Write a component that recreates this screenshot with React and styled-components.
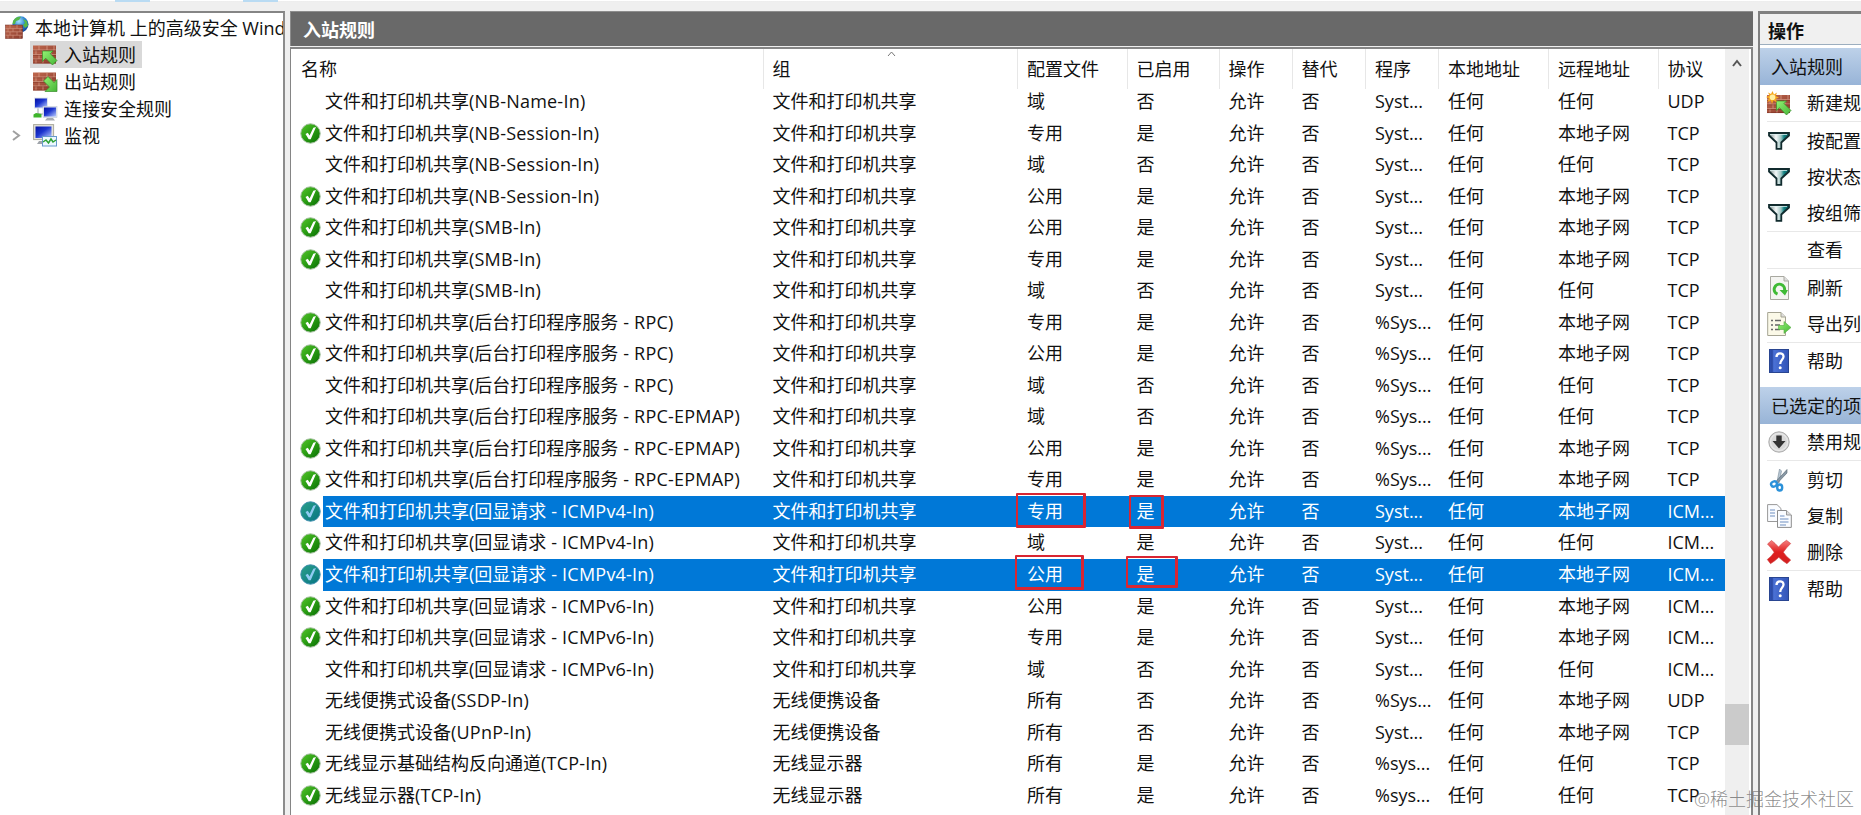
import React from "react";
import styled, { createGlobalStyle, css } from "styled-components";

const Global = createGlobalStyle`
  * { box-sizing: border-box; }
  html, body { margin: 0; height: 100%; overflow: hidden; }
  body {
    background: #efefef;
    color: #111;
    font: 18px/24px "Open Sans", "Noto Sans CJK SC", sans-serif;
    white-space: pre;
  }
  svg { display: block; flex: none; overflow: visible; }
`;

const Window = styled.div`
  position: relative;
  width: 1861px;
  height: 815px;
  display: flex;
  flex-direction: column;
  overflow: hidden;
`;
const Toolbar = styled.div`
  height: 11px;
  display: flex;
  padding-left: 115px;
  gap: 93px;
  background: linear-gradient(#fff 1px, #ececec 1px, #efefef 2px);
`;
const ToolMark = styled.i`
  width: 35px;
  height: 2px;
  background: #b9dbf3;
`;
const Panes = styled.div`
  flex: 1;
  min-height: 0;
  display: flex;
  gap: 5px;
`;

const TreePane = styled.nav`
  width: 285px;
  background: #fff;
  border-top: 2px solid #858585;
  border-right: 2px solid #8c8c8c;
  padding-top: 1px;
  overflow: hidden;
`;
const TreeRow = styled.div`
  height: 27px;
  display: flex;
  align-items: center;
  padding-left: ${(p) => (p.$root ? 5 : 12)}px;
  gap: ${(p) => (p.$root ? 6 : 0)}px;
`;
const Expander = styled.span`
  width: 18px;
  display: flex;
`;
const TreeItem = styled.span`
  height: 27px;
  display: flex;
  align-items: center;
  gap: 7px;
  padding: 0 6px 0 3px;
  background: ${(p) => (p.$active ? "#d9d9d9" : "transparent")};
`;

const MainPane = styled.main`
  width: 1463px;
  display: flex;
  flex-direction: column;
`;
const Title = styled.div`
  height: 35px;
  padding: 2px 0 0 12px;
  display: flex;
  align-items: center;
  background: #696969;
  border: solid #8d8d8d;
  border-width: 1px 0 0 1px;
  color: #fff;
  font-weight: 700;
`;
const ListFrame = styled.div`
  flex: 1;
  min-height: 0;
  margin-top: 1px;
  display: flex;
  background: #fff;
  border: 2px solid #858585;
  border-bottom: 0;
  border-left-width: 1px;
  overflow: hidden;
`;
const Table = styled.div`
  width: 1434px;
  display: flex;
  flex-direction: column;
`;
const columns = css`
  display: grid;
  grid-template-columns: 472.5px 254.5px 109.5px 92px 73px 73.5px 73px 110px 109.5px 66.500px;
`;
const Header = styled.div`
  ${columns}
  height: 37px;
  flex: none;
  line-height: 40px;
`;
const HeadCell = styled.div`
  position: relative;
  border-right: 1px solid #e7e7e7;
  padding-left: ${(p) => (p.$first ? 10 : 9)}px;
  &:last-child { border-right: 0; }
`;
const SortMark = styled.span`
  position: absolute;
  left: 123px;
  top: 2px;
`;
const Row = styled.div`
  ${columns}
  height: 31.54px;
  flex: none;
  line-height: 31.5px;
  color: ${(p) => (p.$selected ? "#fff" : "#111")};
  background: ${(p) => (p.$selected ? "linear-gradient(90deg, #fff 32px, #0078d7 32px)" : "none")};
`;
const Cell = styled.div`
  padding-left: 9px;
`;
const NameCell = styled.div`
  display: flex;
  align-items: center;
  padding-left: 9px;
`;
const StatusSlot = styled.span`
  width: 25px;
  flex: none;
`;
const Latin = styled.span`
  letter-spacing: 0.22px;
`;
const Scrollbar = styled.div`
  flex: 1;
  margin-right: 2px;
  background: #efefef;
  display: flex;
  flex-direction: column;
  align-items: center;
  justify-content: space-between;
  padding: 11px 0 70px;
`;
const Thumb = styled.i`
  width: 24px;
  height: 41px;
  background: #cbcbcb;
`;

const ActionPane = styled.aside`
  flex: 1;
  min-width: 0;
  background: #fff;
  border: solid #808080;
  border-width: 3px 0 0 2px;
  overflow: hidden;
`;
const ActionTitle = styled.div`
  height: 31px;
  padding: 4px 0 0 8px;
  background: #f0f0f0;
  border-bottom: 1px solid #9caebf;
  font-weight: 700;
  line-height: 27px;
`;
const Section = styled.div`
  height: 37px;
  margin-top: ${(p) => p.$gap}px;
  padding-left: 11px;
  background: linear-gradient(#bdd1e9, #98b4d7);
  line-height: 38px;
`;
const Action = styled.div`
  height: 36px;
  display: flex;
  align-items: center;
  gap: 16px;
  padding-left: 7px;
  line-height: 36px;
`;
const IconSlot = styled.span`
  width: 24px;
  flex: none;
  display: flex;
  justify-content: center;
`;
const Divider = styled.hr`
  height: 1px;
  margin: 0 0 0.5px 7px;
  border: 0;
  background: #e8e8e8;
`;
const Mark = styled.span`
  position: absolute;
  left: ${(p) => p.$x}px;
  top: ${(p) => p.$y}px;
  width: ${(p) => p.$w}px;
  height: ${(p) => p.$h}px;
  border: solid #d92632;
  border-width: 2px 3px 3px 2px;
  border-radius: 1px;
`;
const Watermark = styled.span`
  position: absolute;
  right: 7px;
  bottom: 4px;
  color: rgba(110, 110, 110, 0.8);
  font-weight: 300;
`;

const Defs = () => (
  <svg width="0" height="0" style={{ position: "absolute" }}>
    <defs>
      <linearGradient id="brick" x1="0" y1="0" x2="1" y2="1">
        <stop offset="0" stopColor="#c0694f" />
        <stop offset="1" stopColor="#8a3a2c" />
      </linearGradient>
      <linearGradient id="arrow" x1="0" y1="0" x2="1" y2="1">
        <stop offset="0" stopColor="#93f274" />
        <stop offset="1" stopColor="#45b536" />
      </linearGradient>
      <radialGradient id="globe" cx=".4" cy=".3" r=".75">
        <stop offset="0" stopColor="#a9e4ff" />
        <stop offset=".5" stopColor="#2f86d4" />
        <stop offset="1" stopColor="#0b3f94" />
      </radialGradient>
      <linearGradient id="screen" x1="0" y1="0" x2="1" y2="1">
        <stop offset="0" stopColor="#0410a0" />
        <stop offset=".45" stopColor="#1c35cf" />
        <stop offset="1" stopColor="#b9ccff" />
      </linearGradient>
      <linearGradient id="ok" x1="0" y1="0" x2="1" y2="1">
        <stop offset="0" stopColor="#56c62c" />
        <stop offset=".5" stopColor="#2a9d13" />
        <stop offset="1" stopColor="#086d04" />
      </linearGradient>
      <linearGradient id="okSel" x1="0" y1="0" x2="1" y2="1">
        <stop offset="0" stopColor="#2ba18a" />
        <stop offset="1" stopColor="#067383" />
      </linearGradient>
      <linearGradient id="funnel">
        <stop offset="0" stopColor="#6f8585" />
        <stop offset=".35" stopColor="#f4f8f8" />
        <stop offset=".6" stopColor="#9ec4c2" />
        <stop offset=".75" stopColor="#108080" />
        <stop offset="1" stopColor="#0b5c60" />
      </linearGradient>
      <linearGradient id="help">
        <stop offset="0" stopColor="#2546a8" />
        <stop offset=".25" stopColor="#4a70d4" />
        <stop offset="1" stopColor="#3355b8" />
      </linearGradient>
      <linearGradient id="cross" x1="0" y1="0" x2="0" y2="1">
        <stop offset="0" stopColor="#f58080" />
        <stop offset=".5" stopColor="#e01f1f" />
        <stop offset="1" stopColor="#d22020" />
      </linearGradient>
    </defs>
  </svg>
);

const Bricks = ({ y = 0 }) => (
  <g transform={`translate(0 ${y})`}>
    <rect width="23" height="18" fill="url(#brick)" />
    <path d="M0 4.5H23M0 9H23M0 13.5H23M6 0V4.500M14 0V4.500M21 0V4.500M3 4.500V9M10 4.500V9M18 4.500V9M6 9V13.500M14 9V13.500M3 13.500V18M10 13.500V18M18 13.500V18" stroke="#e0a893" strokeWidth=".9" fill="none" opacity=".75" />
    <path d="M0 5.300H23M0 9.800H23M0 14.300H23M0 17.600H23" stroke="#6c2118" strokeWidth=".6" opacity=".7" />
  </g>
);
const InArrow = "M9.500 6H20L17.300 8.700L24 15.500L19.500 20L12.700 13.200L9.500 16.500Z";
const OutArrow = "M10.500 9L15 4.500L21 10.500L24 7.500V19.500H12L16.500 15Z";
const WallIcon = ({ out }) => (
  <svg width="24" height="20" viewBox="0 0 24 20">
    <Bricks y={0.5} />
    <path d={out ? OutArrow : InArrow} fill="url(#arrow)" stroke="#378d29" strokeWidth=".7" />
  </svg>
);
const NewRuleIcon = () => (
  <svg width="24" height="24" viewBox="0 0 24 24">
    <Bricks y={4} />
    <path d="M9.500 10H19.500L17 12.500L24 19.500L19.500 24L12.500 16.700L9.500 19.500Z" fill="url(#arrow)" stroke="#378d29" strokeWidth=".7" />
    <path d="M5.500 0L7 3.500L10 1.500L8.700 5L12 6.500L8.700 8L10 11.500L6.500 9.500L5 13L3.800 9.500L.3 11L2 7.500L-1 6L2.500 4.500L1 1.500L4 3Z" fill="#f6a61d" />
    <circle cx="5.500" cy="6.300" r="2.800" fill="#fff0a2" />
  </svg>
);
const FirewallIcon = () => (
  <svg width="24" height="24" viewBox="0 0 24 24">
    <circle cx="15.500" cy="8.300" r="8" fill="url(#globe)" />
    <path d="M8 5C10 1 14 0 16 1L14 4L11 5L10 8L7.500 8ZM18 3L22 5L23 10L20 12L18 9L20 7ZM13 9L17 11L17 16L13 14Z" fill="#55b849" />
    <rect x=".5" y="9" width="17" height="13.500" fill="url(#brick)" stroke="#6d241b" strokeWidth=".5" />
    <path d="M.5 12.400H17.500M.5 15.800H17.500M.5 19.200H17.500M5 9V12.400M12 9V12.400M8 12.400V15.800M15 12.400V15.800M3 12.400V15.800M5 15.800V19.200M12 15.800V19.200M8 19.200V22.500M15 19.200V22.500M3 19.200V22.500" stroke="#d0907c" strokeWidth=".7" />
  </svg>
);
const ConnectionIcon = () => (
  <svg width="24" height="24" viewBox="0 0 24 24">
    <path d="M5 10V17H11" stroke="#9aa0a8" fill="none" />
    <rect x="1" y=".5" width="14" height="11" fill="#dfe5ee" />
    <rect x="2" y="1.500" width="12" height="9" fill="url(#screen)" />
    <rect x="10" y="9.500" width="14" height="11" fill="#dfe5ee" stroke="#bcc4d0" strokeWidth=".5" />
    <rect x="11" y="10.500" width="12" height="9" fill="url(#screen)" />
    <path d="M14 21H20L22 23.500H12Z" fill="#a7acb2" />
    <path d="M.5 17.500L3 16L8.500 17V20.500H.5Z" fill="#3fb52c" />
  </svg>
);
const MonitorIcon = () => (
  <svg width="24" height="24" viewBox="0 0 24 24">
    <rect x=".6" y=".6" width="20" height="15" fill="#e2e2dc" stroke="#aaa99c" />
    <rect x="2.500" y="2.500" width="16" height="11.500" fill="url(#screen)" />
    <path d="M6 17H12V20H4Z" fill="#a0a4aa" />
    <rect x="9.500" y="12.500" width="14" height="9.500" fill="#edf8ff" stroke="#6699cc" />
    <path d="M10 18L13 16L15.500 19L18 15L20 18L23 16" fill="none" stroke="#2fa336" strokeWidth="1.500" />
  </svg>
);
const StatusIcon = ({ selected }) => (
  <svg width="21" height="21" viewBox="0 0 21 21">
    <circle cx="10.500" cy="10.500" r="9.700" fill={selected ? "url(#okSel)" : "url(#ok)"} stroke={selected ? "#398dab" : "#9fbd9a"} strokeWidth="1" />
    <path d="M5.500 11L7.800 9.800L9.600 12.600L13.300 4.800L16 4L10.700 16.200H8.700Z" fill={selected ? "#8fcbf2" : "#fff"} />
  </svg>
);
const FunnelIcon = () => (
  <svg width="22" height="18" viewBox="0 0 22 18">
    <path d="M1 1H21V3.500L13.300 10.500V16.800H8.500V10.500L1 3.500Z" fill="url(#funnel)" stroke="#112b2e" strokeWidth="1.800" />
    <path d="M2 2.500H19" stroke="#d9eeee" strokeWidth=".8" />
  </svg>
);
const RefreshIcon = () => (
  <svg width="24" height="24" viewBox="0 0 24 24">
    <path d="M3.500 .5H17L21.500 5V23.500H3.500Z" fill="#f4f4f1" stroke="#a8a8a0" />
    <path d="M17 .5V5H21.500" fill="#ddd" stroke="#a8a8a0" />
    <path d="M10.500 18.200A5.200 5.200 0 1 1 17.500 14.500" fill="none" stroke="#3fba35" strokeWidth="3" />
    <path d="M12.500 14H21L18 19.500Z" fill="#3fba35" />
  </svg>
);
const ExportIcon = () => (
  <svg width="24" height="24" viewBox="0 0 24 24">
    <path d="M.7 .5H14L18.500 5V23.500H.7Z" fill="#fbf9e8" stroke="#a5a493" />
    <path d="M14 .5V5H18.500" fill="#ddd" stroke="#a5a493" />
    <path d="M4 8.500H6M4 13H6M4 17.500H6M8 8.500H14M8 13H13M8 17.500H13" stroke="#666" strokeWidth="1.400" />
    <path d="M11.500 13.500H17V9.500L24 15.500L17 21.500V17.500H11.500Z" fill="url(#arrow)" stroke="#55a943" strokeWidth=".6" />
  </svg>
);
const HelpIcon = () => (
  <svg width="20" height="24" viewBox="0 0 20 24">
    <rect x=".5" y=".5" width="19" height="23" fill="url(#help)" stroke="#294591" />
    <path d="M3 1V23" stroke="#244197" />
    <path d="M7.500 8C7.500 3 14.800 3.200 14.500 7.800C14.300 10.800 11.200 10.800 11.200 15" fill="none" stroke="#fff" strokeWidth="2.300" />
    <circle cx="11.200" cy="18.800" r="1.500" fill="#fff" />
  </svg>
);
const DisableIcon = () => (
  <svg width="22" height="22" viewBox="0 0 22 22">
    <circle cx="11" cy="11" r="10.200" fill="#d9d9d9" stroke="#aaa" />
    <circle cx="11" cy="11" r="8.500" fill="none" stroke="#ececec" />
    <path d="M8.300 4.500H13.700V10H17.500L11 17.500L4.500 10H8.300Z" fill="#333" />
  </svg>
);
const CutIcon = () => (
  <svg width="20" height="24" viewBox="0 0 20 24">
    <path d="M10.500 1L8 14L10 15L12.500 3Z" fill="#b9c7d4" stroke="#758896" strokeWidth=".6" />
    <path d="M18 1.500V5L8.500 15L7 13.500Z" fill="#8898a5" stroke="#566570" strokeWidth=".6" />
    <ellipse cx="5" cy="16" rx="3" ry="2.500" transform="rotate(-25 5 16)" fill="none" stroke="#2b91d9" strokeWidth="2.400" />
    <ellipse cx="10.700" cy="19.500" rx="2.500" ry="3" fill="none" stroke="#2b91d9" strokeWidth="2.400" />
  </svg>
);
const CopyIcon = () => (
  <svg width="25" height="24" viewBox="0 0 25 24">
    <path d="M.6 .6H10L14 4.500V17.500H.6Z" fill="#fafcff" stroke="#999" />
    <path d="M3 6H8M3 9H8M3 12H8" stroke="#6e8fc0" />
    <path d="M10.500 6.500H19.500L24.300 11V23.400H10.500Z" fill="#fafcff" stroke="#8c8c8c" />
    <path d="M19.500 6.500V11H24.300" fill="#ddd" stroke="#999" />
    <path d="M13 12H17.500M13 15H21.500M13 18H21.500M13 21H19" stroke="#6e8fc0" />
  </svg>
);
const DeleteIcon = () => (
  <svg width="24" height="24" viewBox="0 0 24 24">
    <path d="M.5 4L4.500 .5Q8 3 11.500 7Q15 3 19.500 .3L23.700 3.500Q19.500 7.500 16.300 12.200Q19 16.500 23.700 20L20 23.700Q15.500 21 11.800 17.300Q8 21 3.500 23.700L.3 19.500Q4.500 16.500 7.200 12.200Q4.500 8 .5 4Z" fill="url(#cross)" stroke="#cf4040" strokeWidth=".6" />
  </svg>
);
const Chevron = ({ w, h, color, stroke = 1.5, right }) => (
  <svg width={w} height={h} viewBox={`0 0 ${w} ${h}`}>
    <path d={right ? `M1 1L${w - 1} ${h / 2}L1 ${h - 1}` : `M1 ${h - 1}L${w / 2} 1L${w - 1} ${h - 1}`} fill="none" stroke={color} strokeWidth={stroke} />
  </svg>
);

const share = "文件和打印机共享";
const spool = "(后台打印程序服务 - ";
const lan = "本地子网";
const rows = [
  ["(NB-Name-In)", "域", "否", "Syst...", "任何", "UDP"],
  ["(NB-Session-In)", "专用", "是", "Syst...", lan, "TCP"],
  ["(NB-Session-In)", "域", "否", "Syst...", "任何", "TCP"],
  ["(NB-Session-In)", "公用", "是", "Syst...", lan, "TCP"],
  ["(SMB-In)", "公用", "是", "Syst...", lan, "TCP"],
  ["(SMB-In)", "专用", "是", "Syst...", lan, "TCP"],
  ["(SMB-In)", "域", "否", "Syst...", "任何", "TCP"],
  [spool + "RPC)", "专用", "是", "%Sys...", lan, "TCP"],
  [spool + "RPC)", "公用", "是", "%Sys...", lan, "TCP"],
  [spool + "RPC)", "域", "否", "%Sys...", "任何", "TCP"],
  [spool + "RPC-EPMAP)", "域", "否", "%Sys...", "任何", "TCP"],
  [spool + "RPC-EPMAP)", "公用", "是", "%Sys...", lan, "TCP"],
  [spool + "RPC-EPMAP)", "专用", "是", "%Sys...", lan, "TCP"],
  ["(回显请求 - ICMPv4-In)", "专用", "是", "Syst...", lan, "ICM...", true],
  ["(回显请求 - ICMPv4-In)", "域", "是", "Syst...", "任何", "ICM..."],
  ["(回显请求 - ICMPv4-In)", "公用", "是", "Syst...", lan, "ICM...", true],
  ["(回显请求 - ICMPv6-In)", "公用", "是", "Syst...", lan, "ICM..."],
  ["(回显请求 - ICMPv6-In)", "专用", "是", "Syst...", lan, "ICM..."],
  ["(回显请求 - ICMPv6-In)", "域", "否", "Syst...", "任何", "ICM..."],
  ["(SSDP-In)", "所有", "否", "%Sys...", lan, "UDP", false, "无线便携式设备", "无线便携设备"],
  ["(UPnP-In)", "所有", "否", "Syst...", lan, "TCP", false, "无线便携式设备", "无线便携设备"],
  ["(TCP-In)", "所有", "是", "%sys...", "任何", "TCP", false, "无线显示基础结构反向通道", "无线显示器"],
  ["(TCP-In)", "所有", "是", "%sys...", "任何", "TCP", false, "无线显示器", "无线显示器"],
];
const heads = ["名称", "组", "配置文件", "已启用", "操作", "替代", "程序", "本地地址", "远程地址", "协议"];
const tree = [
  ["入站规则", <WallIcon />],
  ["出站规则", <WallIcon out />],
  ["连接安全规则", <ConnectionIcon />],
  ["监视", <MonitorIcon />],
];
const ruleActions = [
  ["新建规", <NewRuleIcon />, true],
  ["按配置", <FunnelIcon />],
  ["按状态", <FunnelIcon />],
  ["按组筛", <FunnelIcon />, true],
  ["查看", null, true],
  ["刷新", <RefreshIcon />],
  ["导出列", <ExportIcon />, true],
  ["帮助", <HelpIcon />],
];
const itemActions = [
  ["禁用规", <DisableIcon />, true],
  ["剪切", <CutIcon />],
  ["复制", <CopyIcon />],
  ["删除", <DeleteIcon />, true],
  ["帮助", <HelpIcon />],
];

const ActionList = ({ items }) =>
  items.map(([label, icon, divided], i) => (
    <React.Fragment key={i}>
      <Action>
        <IconSlot>{icon}</IconSlot>
        {label}
      </Action>
      {divided && <Divider />}
    </React.Fragment>
  ));

const RuleRow = ({ rule }) => {
  const [suffix, profile, enabled, program, remote, protocol, selected, name = share, group = share] = rule;
  const on = enabled === "是";
  return (
    <Row $selected={selected}>
      <NameCell>
        <StatusSlot>{on && <StatusIcon selected={selected} />}</StatusSlot>
        <span>
          {(name + suffix).split(/([\x20-\x7e]{2,})/).map((part, i) => (i % 2 ? <Latin key={i}>{part}</Latin> : part))}
        </span>
      </NameCell>
      {[group, profile, enabled, "允许", "否", program, "任何", remote, protocol].map((v, i) => (
        <Cell key={i}>{v}</Cell>
      ))}
    </Row>
  );
};

export default function App() {
  return (
    <Window>
      <Global />
      <Defs />
      <Toolbar>
        <ToolMark />
        <ToolMark />
      </Toolbar>
      <Panes>
        <TreePane>
          <TreeRow $root>
            <FirewallIcon />
            本地计算机 上的高级安全 Wind
          </TreeRow>
          {tree.map(([label, icon], i) => (
            <TreeRow key={label}>
              <Expander>{i === 3 && <Chevron w={8} h={11} color="#a0a0a0" stroke={2} right />}</Expander>
              <TreeItem $active={i === 0}>
                {icon}
                {label}
              </TreeItem>
            </TreeRow>
          ))}
        </TreePane>
        <MainPane>
          <Title>入站规则</Title>
          <ListFrame>
            <Table>
              <Header>
                {heads.map((h, i) => (
                  <HeadCell key={h} $first={i === 0}>
                    {h}
                    {i === 1 && (
                      <SortMark>
                        <Chevron w={9} h={6} color="#777" stroke={1} />
                      </SortMark>
                    )}
                  </HeadCell>
                ))}
              </Header>
              {rows.map((r, i) => (
                <RuleRow key={i} rule={r} />
              ))}
            </Table>
            <Scrollbar>
              <Chevron w={10} h={7} color="#555" stroke={2} />
              <Thumb />
            </Scrollbar>
          </ListFrame>
        </MainPane>
        <ActionPane>
          <ActionTitle>操作</ActionTitle>
          <Section $gap={3}>入站规则</Section>
          <ActionList items={ruleActions} />
          <Section $gap={8}>已选定的项</Section>
          <ActionList items={itemActions} />
        </ActionPane>
      </Panes>
      <Mark $x={1016} $y={493} $w={70} $h={35} />
      <Mark $x={1129} $y={495} $w={35} $h={34} />
      <Mark $x={1015} $y={555} $w={69} $h={35} />
      <Mark $x={1126} $y={556} $w={52} $h={32} />
      <Watermark>@稀土掘金技术社区</Watermark>
    </Window>
  );
}
